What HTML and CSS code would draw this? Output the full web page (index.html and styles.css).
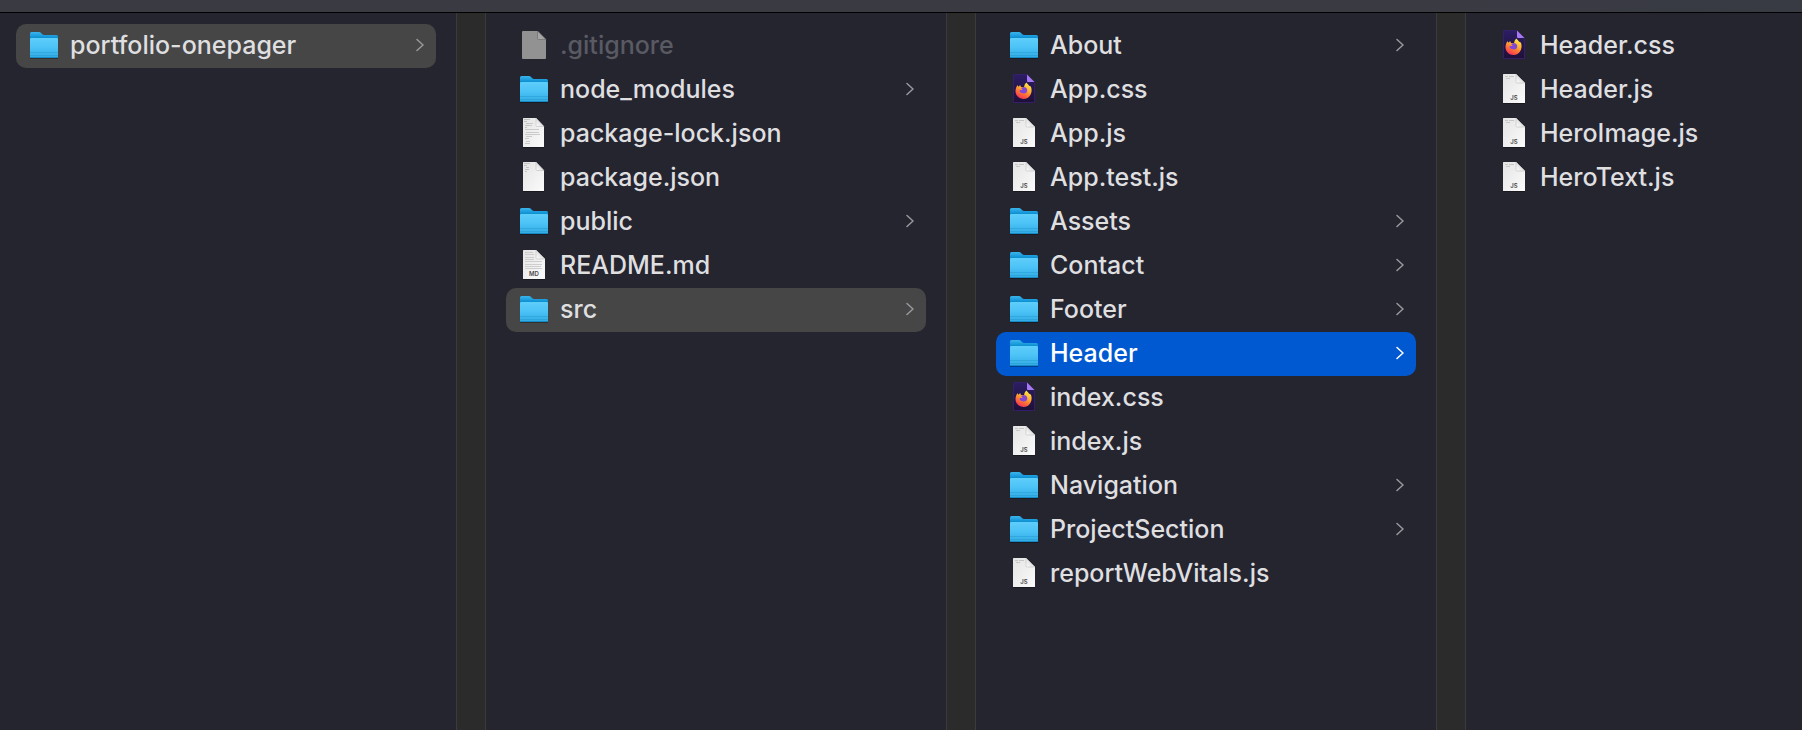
FILE: index.html
```
<!DOCTYPE html>
<html lang="en">
<head>
<meta charset="utf-8">
<title>portfolio-onepager</title>
<link rel="stylesheet" href="styles.css">
</head>
<body>
<svg class="defs" aria-hidden="true">
  <defs>
    <linearGradient id="folder-front" x1="0" y1="0" x2="0" y2="1"><stop offset="0" stop-color="#5fcefb"/><stop offset=".5" stop-color="#4bc2f6"/><stop offset="1" stop-color="#30aae2"/></linearGradient>
    <linearGradient id="folder-back" x1="0" y1="0" x2="0" y2="1"><stop offset="0" stop-color="#3bb4ec"/><stop offset=".5" stop-color="#0a8fd2"/></linearGradient>
    <linearGradient id="paper" x1="0" y1="0" x2="1" y2="1"><stop offset="0" stop-color="#e4e4e4"/><stop offset="1" stop-color="#fbfbfb"/></linearGradient>
    <linearGradient id="fold" x1="0" y1="1" x2="1" y2="0"><stop offset="0" stop-color="#ffffff"/><stop offset="1" stop-color="#c4c4c4"/></linearGradient>
    <linearGradient id="night" x1="0" y1="0" x2="0" y2="1"><stop offset="0" stop-color="#2b1d63"/><stop offset="1" stop-color="#1f1038"/></linearGradient>
    <linearGradient id="flame" x1=".8" y1="0" x2=".3" y2="1"><stop offset="0" stop-color="#fff04a"/><stop offset=".4" stop-color="#ffb02e"/><stop offset=".7" stop-color="#ff6a38"/><stop offset="1" stop-color="#f5305c"/></linearGradient>
    <symbol id="folder" viewBox="0 -1 28 32">
      <path d="M0 27h28v2H0z" fill="#000" opacity=".3"/>
      <path d="M0 3.500Q0 2 1.500 2H9q1.200 0 2 .9l1 1q.9 1.100 2.200 1.100H26.500Q28 5 28 6.500V14H0z" fill="url(#folder-back)"/>
      <path d="M0 9.200Q0 8 1.200 8H26.800Q28 8 28 9.200V26.500Q28 28 26.500 28H1.500Q0 28 0 26.500z" fill="url(#folder-front)"/>
      <path d="M0 22.500H28M0 25.500H28" stroke="#259bd3" opacity=".5"/>
      <path d="M.5 27.500H27.500" stroke="#168ac4"/>
    </symbol>
    <symbol id="page" viewBox="0 0 28 32">
      <path d="M3 29.500H25V31H3z" fill="#000" opacity=".35"/>
      <path d="M3 1.500Q3 1 3.500 1H16l9 9V29.500Q25 30 24.500 30H3.500Q3 30 3 29.500z" fill="url(#paper)"/>
      <path d="M16 1l9 9h-8q-1 0-1-1z" fill="url(#fold)" stroke="#b5b5b5" stroke-width=".5"/>
    </symbol>
    <symbol id="json" viewBox="0 0 28 32">
      <path d="M3 29.500H24V31H3z" fill="#000" opacity=".35"/>
      <path d="M3 1.500Q3 1 3.500 1H16l8 8.500V29.500Q24 30 23.500 30H3.500Q3 30 3 29.500z" fill="url(#paper)"/>
      <path d="M16 1l8 8.500h-7q-1 0-1-1z" fill="url(#fold)" stroke="#b5b5b5" stroke-width=".5"/>
      <path d="M4 2.500h6M4 4.500h3M6 6.500h3M5 8.500h4M5 10.500h2" stroke="#b9b9b9" stroke-width=".8"/>
    </symbol>
    <symbol id="lock" viewBox="0 0 28 32">
      <use href="#json"/>
      <path d="M6 6.500h7M6 8.500h6M5 12.500h14M6 15.500h13M5 17.500h15M6 19.500h6M5 21.500h4M6 24.500h4M5 26.500h5" stroke="#c0c0c0" stroke-width=".8"/>
    </symbol>
    <symbol id="js" viewBox="0 0 28 32">
      <use href="#page"/>
      <path d="M5 3.500h3M9 3.500h5M6 5.500h4" stroke="#bdbdbd" stroke-width=".8"/>
      <text x="14" y="27" class="badge">JS</text>
    </symbol>
    <symbol id="md" viewBox="0 0 28 32">
      <use href="#page"/>
      <path d="M5 3.500h8M5 5.500h9M5 8.500h9M5 10.500h9M5 12.500h17M5 15.500h17M5 17.500h16M5 19.500h17" stroke="#c4c4c4" stroke-width=".8"/>
      <text x="14" y="27" class="badge">MD</text>
    </symbol>
    <symbol id="blank" viewBox="0 0 28 32">
      <path d="M2 3Q2 2 3 2H17.500L26 10.500V29Q26 30 25 30H3Q2 30 2 29z" fill="#929292"/>
      <path d="M17.500 2L26 10.500H18.500q-1 0-1-1z" fill="#a6a6a6" stroke="#6f6f6f" stroke-width=".7"/>
    </symbol>
    <symbol id="css" viewBox="0 0 28 32">
      <path d="M3.500 1.500H17L24.500 9.500V29.500H3.500z" fill="url(#night)" stroke="#351f69"/>
      <path d="M17 1.500L24.500 9H18q-1 0-1-1z" fill="#a678f2"/>
      <path d="M16.500 9.500c.8 1.600 2 2.200 3 3.500 1-.2 1.500.8 1.700 1.500 1.600 5.500-1.700 11.500-7.500 11.500-4.700 0-8.200-3.500-8.200-8 0-2.200.8-4.200 1.900-5.800l1.300 1.500 1.400-1.700.9 2.100 3 .3c.2-2 1-3.900 2.500-4.900z" fill="url(#flame)"/>
      <path d="M11 14.800c1.300.5 2.300-.8 4-.6 2.900.8 3.400 6.300-1.100 6.300-3.200 0-5-2.200-4-3.700.8.300 2 .2 2.800-.4-.9-.3-1.500-.9-1.700-1.600z" fill="#8347d6"/>
    </symbol>
    <symbol id="chevron" viewBox="0 0 8 14"><path d="M1 1.500L7 7L1 12.500" fill="none" stroke="currentColor" stroke-width="1.500" stroke-linecap="round" stroke-linejoin="round"/></symbol>
  </defs>
</svg>
<div class="toolbar"></div>
<main class="browser">
  <ul class="column column-root">
    <li><a class="row open" href="#"><svg class="icon"><use href="#folder"/></svg><span class="name">portfolio-onepager</span><svg class="chevron"><use href="#chevron"/></svg></a></li>
  </ul>
  <ul class="column">
    <li><a class="row hidden-file" href="#"><svg class="icon"><use href="#blank"/></svg><span class="name">.gitignore</span></a></li>
    <li><a class="row" href="#"><svg class="icon"><use href="#folder"/></svg><span class="name">node_modules</span><svg class="chevron"><use href="#chevron"/></svg></a></li>
    <li><a class="row" href="#"><svg class="icon"><use href="#lock"/></svg><span class="name">package-lock.json</span></a></li>
    <li><a class="row" href="#"><svg class="icon"><use href="#json"/></svg><span class="name">package.json</span></a></li>
    <li><a class="row" href="#"><svg class="icon"><use href="#folder"/></svg><span class="name">public</span><svg class="chevron"><use href="#chevron"/></svg></a></li>
    <li><a class="row" href="#"><svg class="icon"><use href="#md"/></svg><span class="name">README.md</span></a></li>
    <li><a class="row open" href="#"><svg class="icon"><use href="#folder"/></svg><span class="name">src</span><svg class="chevron"><use href="#chevron"/></svg></a></li>
  </ul>
  <ul class="column">
    <li><a class="row" href="#"><svg class="icon"><use href="#folder"/></svg><span class="name">About</span><svg class="chevron"><use href="#chevron"/></svg></a></li>
    <li><a class="row" href="#"><svg class="icon"><use href="#css"/></svg><span class="name">App.css</span></a></li>
    <li><a class="row" href="#"><svg class="icon"><use href="#js"/></svg><span class="name">App.js</span></a></li>
    <li><a class="row" href="#"><svg class="icon"><use href="#js"/></svg><span class="name">App.test.js</span></a></li>
    <li><a class="row" href="#"><svg class="icon"><use href="#folder"/></svg><span class="name">Assets</span><svg class="chevron"><use href="#chevron"/></svg></a></li>
    <li><a class="row" href="#"><svg class="icon"><use href="#folder"/></svg><span class="name">Contact</span><svg class="chevron"><use href="#chevron"/></svg></a></li>
    <li><a class="row" href="#"><svg class="icon"><use href="#folder"/></svg><span class="name">Footer</span><svg class="chevron"><use href="#chevron"/></svg></a></li>
    <li><a class="row selected" href="#" aria-current="true"><svg class="icon"><use href="#folder"/></svg><span class="name">Header</span><svg class="chevron"><use href="#chevron"/></svg></a></li>
    <li><a class="row" href="#"><svg class="icon"><use href="#css"/></svg><span class="name">index.css</span></a></li>
    <li><a class="row" href="#"><svg class="icon"><use href="#js"/></svg><span class="name">index.js</span></a></li>
    <li><a class="row" href="#"><svg class="icon"><use href="#folder"/></svg><span class="name">Navigation</span><svg class="chevron"><use href="#chevron"/></svg></a></li>
    <li><a class="row" href="#"><svg class="icon"><use href="#folder"/></svg><span class="name">ProjectSection</span><svg class="chevron"><use href="#chevron"/></svg></a></li>
    <li><a class="row" href="#"><svg class="icon"><use href="#js"/></svg><span class="name">reportWebVitals.js</span></a></li>
  </ul>
  <ul class="column">
    <li><a class="row" href="#"><svg class="icon"><use href="#css"/></svg><span class="name">Header.css</span></a></li>
    <li><a class="row" href="#"><svg class="icon"><use href="#js"/></svg><span class="name">Header.js</span></a></li>
    <li><a class="row" href="#"><svg class="icon"><use href="#js"/></svg><span class="name">HeroImage.js</span></a></li>
    <li><a class="row" href="#"><svg class="icon"><use href="#js"/></svg><span class="name">HeroText.js</span></a></li>
  </ul>
</main>
</body>
</html>
```
FILE: styles.css
```
* {
  box-sizing: border-box;
}

body {
  display: flex;
  flex-direction: column;
  min-height: 100vh;
  margin: 0;
  background: #252530;
  color: #dfdfe0;
  font: 500 25px/42px Inter, "Liberation Sans", sans-serif;
}

.defs {
  display: block;
  width: 0;
  height: 0;
}

.toolbar {
  height: 13px;
  border-bottom: 1px solid #000;
  background: linear-gradient(90deg, #3a3a43 80%, #383b43);
}

.browser {
  display: grid;
  flex: 1;
  grid-template-columns: 456fr 490fr 490fr 366fr;
}

.column {
  min-width: 0;
  margin: 0;
  padding: 11px 20px;
  list-style: none;
}

.column-root {
  padding-left: 16px;
}

/* Scroll gutter between neighbouring columns */
.column + .column {
  padding-left: 50px;
  background: linear-gradient(90deg, #3b3b3b 1px, #2b2b2b 1px 29px, #3b3b3b 29px 30px, transparent 30px);
}

.row {
  display: flex;
  align-items: center;
  gap: 12px;
  height: 44px;
  padding: 0 12px 2px 14px;
  border-radius: 10px;
  color: inherit;
  text-decoration: none;
}

.icon {
  flex: none;
  width: 28px;
  height: 32px;
}

.name {
  flex: 1;
  min-width: 0;
  overflow: hidden;
  text-overflow: ellipsis;
  white-space: nowrap;
}

.chevron {
  flex: none;
  width: 8px;
  height: 14px;
  color: #98989d;
}

.open {
  background: #464646;
}

.selected {
  background: #0059d1;
  color: #fff;
}

.selected .chevron {
  color: #fff;
}

.hidden-file {
  color: #5a5a63;
}

.badge {
  fill: #4a4a4a;
  font: 600 6px Inter, sans-serif;
  text-anchor: middle;
}
```
